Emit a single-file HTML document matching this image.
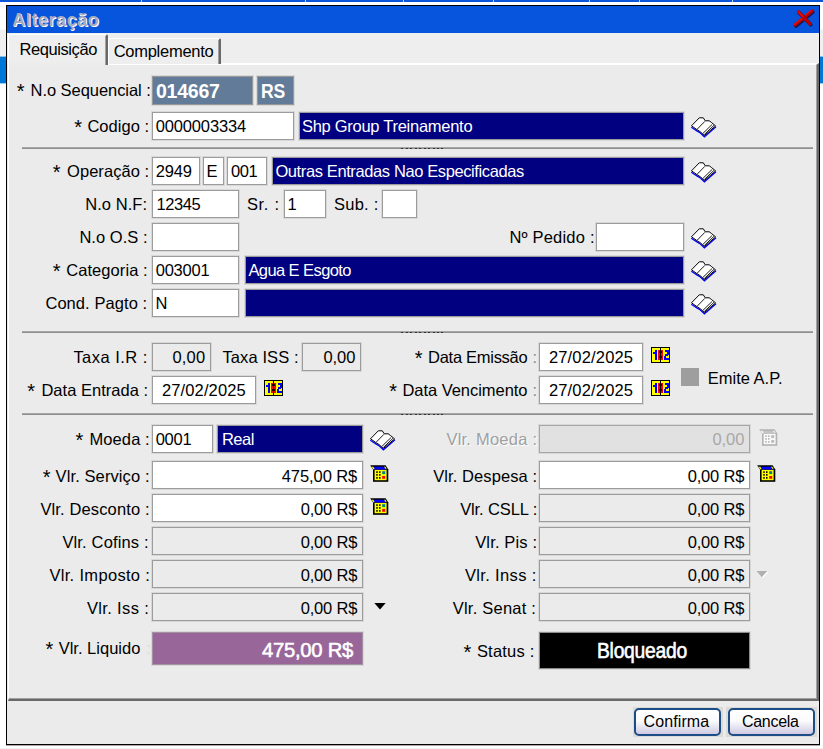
<!DOCTYPE html>
<html><head><meta charset="utf-8"><title>Alteração</title>
<style>
html,body{margin:0;padding:0;}
body{width:823px;height:749px;position:relative;overflow:hidden;background:#fff;font-family:"Liberation Sans", sans-serif;font-size:16.5px;color:#000;}
div,svg{position:absolute;}
</style></head><body>
<div style="left:0;top:0;width:823px;height:2px;background:#0a55d8"></div><div style="position:absolute;left:141px;top:0;width:1px;height:2px;background:#b8cdf0"></div><div style="position:absolute;left:305px;top:0;width:1px;height:2px;background:#b8cdf0"></div><div style="position:absolute;left:403px;top:0;width:1px;height:2px;background:#b8cdf0"></div><div style="position:absolute;left:493px;top:0;width:1px;height:2px;background:#b8cdf0"></div><div style="position:absolute;left:589px;top:0;width:1px;height:2px;background:#b8cdf0"></div><div style="position:absolute;left:639px;top:0;width:1px;height:2px;background:#b8cdf0"></div><div style="position:absolute;left:732px;top:0;width:1px;height:2px;background:#b8cdf0"></div>
<div style="left:0;top:29px;width:823px;height:1px;background:#f8f8f8"></div>
<div style="left:0;top:30px;width:823px;height:27px;background:#f0f0f0"></div>
<div style="left:0;top:56px;width:823px;height:1px;background:#90c0e6"></div>
<div style="left:0;top:57px;width:823px;height:26px;background:#0078d7"></div>
<div style="left:0;top:83px;width:823px;height:1px;background:#99cfef"></div>
<div style="left:0;top:748px;width:823px;height:1px;background:#f3f3f3"></div>
<!-- window -->
<div style="left:6px;top:5px;width:814px;height:740px;box-sizing:border-box;border:1px solid #000;background:#ebebeb"></div>
<div style="left:7px;top:6px;width:812px;height:27px;background:#0855dd"></div>
<div style="left:6px;top:745px;width:814px;height:1px;background:#a8a8a8"></div>
<!-- close X -->
<svg style="left:791px;top:8px" width="26" height="22" viewBox="0 0 26 22"><path d="M7.4,3.9 L18.9,15.7 M21,3 L4,17" stroke="#1c1458" stroke-width="3.5" stroke-linecap="round" fill="none" transform="translate(0.9,1.1)"/><path d="M7.4,3.9 L18.9,15.7 M21,3 L4,17" stroke="#b40000" stroke-width="3.4" stroke-linecap="round" fill="none"/><path d="M6.8,3.2 L12,8.6 M20.4,2.2 L14.5,7.2 M11,10.5 L3.2,16.6" stroke="#f01414" stroke-width="1.1" stroke-linecap="round" fill="none"/></svg>
<!-- tab strip -->
<div style="left:7px;top:33px;width:812px;height:31px;background:#eeeeee"></div>
<!-- tab page -->
<div style="left:8px;top:63px;width:811px;height:638px;box-sizing:border-box;background:#ebebeb;border-top:2px solid #fff;border-left:1px solid #fff;border-right:3px solid #696969;border-bottom:3px solid #696969"></div>
<div style="left:816px;top:65px;width:1px;height:634px;background:#a0a0a0"></div>
<div style="left:9px;top:698px;width:808px;height:1px;background:#a0a0a0"></div>
<!-- inactive tab -->
<div style="left:108px;top:38px;width:113px;height:26px;box-sizing:border-box;background:#eeeeee;border-top:1px solid #fff;border-left:1px solid #fff;border-right:2px solid #696969;border-radius:2px 2px 0 0"></div>
<div style="left:218px;top:40px;width:1px;height:24px;background:#a0a0a0"></div>
<!-- active tab -->
<div style="left:8px;top:34px;width:100px;height:31px;box-sizing:border-box;background:#eeeeee;border-top:1px solid #fff;border-left:1px solid #fff;border-right:2px solid #696969;border-radius:2px 2px 0 0"></div>
<div style="left:105px;top:36px;width:1px;height:29px;background:#a0a0a0"></div>
<div style="left:9px;top:63px;width:96px;height:3px;background:#ececec"></div>
<div style="position:absolute;left:22px;top:147px;width:791px;height:1px;background:#a6a6a6"></div><div style="position:absolute;left:22px;top:148px;width:791px;height:1px;background:#8e8e8e"></div><div style="position:absolute;left:401px;top:148px;width:2px;height:1px;background:#333"></div><div style="position:absolute;left:406px;top:148px;width:2px;height:1px;background:#333"></div><div style="position:absolute;left:410px;top:148px;width:2px;height:1px;background:#333"></div><div style="position:absolute;left:415px;top:148px;width:2px;height:1px;background:#333"></div><div style="position:absolute;left:419px;top:148px;width:2px;height:1px;background:#333"></div><div style="position:absolute;left:424px;top:148px;width:2px;height:1px;background:#333"></div><div style="position:absolute;left:428px;top:148px;width:2px;height:1px;background:#333"></div><div style="position:absolute;left:433px;top:148px;width:2px;height:1px;background:#333"></div><div style="position:absolute;left:437px;top:148px;width:2px;height:1px;background:#333"></div><div style="position:absolute;left:441px;top:148px;width:2px;height:1px;background:#333"></div><div style="position:absolute;left:22px;top:331px;width:791px;height:1px;background:#a6a6a6"></div><div style="position:absolute;left:22px;top:332px;width:791px;height:1px;background:#8e8e8e"></div><div style="position:absolute;left:401px;top:332px;width:2px;height:1px;background:#333"></div><div style="position:absolute;left:406px;top:332px;width:2px;height:1px;background:#333"></div><div style="position:absolute;left:410px;top:332px;width:2px;height:1px;background:#333"></div><div style="position:absolute;left:415px;top:332px;width:2px;height:1px;background:#333"></div><div style="position:absolute;left:419px;top:332px;width:2px;height:1px;background:#333"></div><div style="position:absolute;left:424px;top:332px;width:2px;height:1px;background:#333"></div><div style="position:absolute;left:428px;top:332px;width:2px;height:1px;background:#333"></div><div style="position:absolute;left:433px;top:332px;width:2px;height:1px;background:#333"></div><div style="position:absolute;left:437px;top:332px;width:2px;height:1px;background:#333"></div><div style="position:absolute;left:441px;top:332px;width:2px;height:1px;background:#333"></div><div style="position:absolute;left:22px;top:413px;width:791px;height:1px;background:#a6a6a6"></div><div style="position:absolute;left:22px;top:414px;width:791px;height:1px;background:#8e8e8e"></div><div style="position:absolute;left:401px;top:414px;width:2px;height:1px;background:#333"></div><div style="position:absolute;left:406px;top:414px;width:2px;height:1px;background:#333"></div><div style="position:absolute;left:410px;top:414px;width:2px;height:1px;background:#333"></div><div style="position:absolute;left:415px;top:414px;width:2px;height:1px;background:#333"></div><div style="position:absolute;left:419px;top:414px;width:2px;height:1px;background:#333"></div><div style="position:absolute;left:424px;top:414px;width:2px;height:1px;background:#333"></div><div style="position:absolute;left:428px;top:414px;width:2px;height:1px;background:#333"></div><div style="position:absolute;left:433px;top:414px;width:2px;height:1px;background:#333"></div><div style="position:absolute;left:437px;top:414px;width:2px;height:1px;background:#333"></div><div style="position:absolute;left:441px;top:414px;width:2px;height:1px;background:#333"></div>
<div style="position:absolute;left:152px;top:76px;width:101px;height:29px;box-sizing:border-box;background:#617b98;border:1px solid #989898;box-shadow:0 0 0 1px rgba(150,150,150,0.22);"></div><div style="position:absolute;left:257px;top:76px;width:37px;height:29px;box-sizing:border-box;background:#617b98;border:1px solid #989898;box-shadow:0 0 0 1px rgba(150,150,150,0.22);"></div><div style="position:absolute;left:152px;top:112px;width:142px;height:28px;box-sizing:border-box;background:#fff;border:1px solid #9c9c9c;box-shadow:0 0 0 1px rgba(150,150,150,0.22);"></div><div style="position:absolute;left:299px;top:112px;width:385px;height:28px;box-sizing:border-box;background:#000080;border:1px solid #9c9c9c;box-shadow:0 0 0 1px rgba(150,150,150,0.22);"></div><div style="position:absolute;left:152px;top:157px;width:48px;height:28px;box-sizing:border-box;background:#fff;border:1px solid #9c9c9c;box-shadow:0 0 0 1px rgba(150,150,150,0.22);"></div><div style="position:absolute;left:203px;top:157px;width:21px;height:28px;box-sizing:border-box;background:#fff;border:1px solid #9c9c9c;box-shadow:0 0 0 1px rgba(150,150,150,0.22);"></div><div style="position:absolute;left:227px;top:157px;width:40px;height:28px;box-sizing:border-box;background:#fff;border:1px solid #9c9c9c;box-shadow:0 0 0 1px rgba(150,150,150,0.22);"></div><div style="position:absolute;left:272px;top:157px;width:412px;height:28px;box-sizing:border-box;background:#000080;border:1px solid #9c9c9c;box-shadow:0 0 0 1px rgba(150,150,150,0.22);"></div><div style="position:absolute;left:152px;top:190px;width:87px;height:28px;box-sizing:border-box;background:#fff;border:1px solid #9c9c9c;box-shadow:0 0 0 1px rgba(150,150,150,0.22);"></div><div style="position:absolute;left:284px;top:190px;width:42px;height:28px;box-sizing:border-box;background:#fff;border:1px solid #9c9c9c;box-shadow:0 0 0 1px rgba(150,150,150,0.22);"></div><div style="position:absolute;left:382px;top:190px;width:35px;height:28px;box-sizing:border-box;background:#fff;border:1px solid #9c9c9c;box-shadow:0 0 0 1px rgba(150,150,150,0.22);"></div><div style="position:absolute;left:152px;top:223px;width:87px;height:28px;box-sizing:border-box;background:#fff;border:1px solid #9c9c9c;box-shadow:0 0 0 1px rgba(150,150,150,0.22);"></div><div style="position:absolute;left:596px;top:223px;width:88px;height:28px;box-sizing:border-box;background:#fff;border:1px solid #9c9c9c;box-shadow:0 0 0 1px rgba(150,150,150,0.22);"></div><div style="position:absolute;left:152px;top:256px;width:87px;height:28px;box-sizing:border-box;background:#fff;border:1px solid #9c9c9c;box-shadow:0 0 0 1px rgba(150,150,150,0.22);"></div><div style="position:absolute;left:245px;top:256px;width:439px;height:28px;box-sizing:border-box;background:#000080;border:1px solid #9c9c9c;box-shadow:0 0 0 1px rgba(150,150,150,0.22);"></div><div style="position:absolute;left:152px;top:289px;width:87px;height:28px;box-sizing:border-box;background:#fff;border:1px solid #9c9c9c;box-shadow:0 0 0 1px rgba(150,150,150,0.22);"></div><div style="position:absolute;left:245px;top:289px;width:439px;height:28px;box-sizing:border-box;background:#000080;border:1px solid #9c9c9c;box-shadow:0 0 0 1px rgba(150,150,150,0.22);"></div><div style="position:absolute;left:152px;top:343px;width:59px;height:28px;box-sizing:border-box;background:#ebebeb;border:1px solid #9c9c9c;box-shadow:0 0 0 1px rgba(150,150,150,0.22);"></div><div style="position:absolute;left:302px;top:343px;width:59px;height:28px;box-sizing:border-box;background:#ebebeb;border:1px solid #9c9c9c;box-shadow:0 0 0 1px rgba(150,150,150,0.22);"></div><div style="position:absolute;left:539px;top:343px;width:104px;height:28px;box-sizing:border-box;background:#fff;border:1px solid #9c9c9c;box-shadow:0 0 0 1px rgba(150,150,150,0.22);"></div><div style="position:absolute;left:152px;top:376px;width:104px;height:28px;box-sizing:border-box;background:#fff;border:1px solid #9c9c9c;box-shadow:0 0 0 1px rgba(150,150,150,0.22);"></div><div style="position:absolute;left:539px;top:376px;width:104px;height:28px;box-sizing:border-box;background:#fff;border:1px solid #9c9c9c;box-shadow:0 0 0 1px rgba(150,150,150,0.22);"></div><div style="position:absolute;left:152px;top:425px;width:61px;height:28px;box-sizing:border-box;background:#fff;border:1px solid #9c9c9c;box-shadow:0 0 0 1px rgba(150,150,150,0.22);"></div><div style="position:absolute;left:217px;top:425px;width:146px;height:28px;box-sizing:border-box;background:#000080;border:1px solid #9c9c9c;box-shadow:0 0 0 1px rgba(150,150,150,0.22);"></div><div style="position:absolute;left:539px;top:425px;width:211px;height:28px;box-sizing:border-box;background:#e1e1e1;border:1px solid #a6a6a6;box-shadow:0 0 0 1px rgba(150,150,150,0.22);"></div><div style="position:absolute;left:152px;top:461px;width:211px;height:28px;box-sizing:border-box;background:#fff;border:1px solid #9c9c9c;box-shadow:0 0 0 1px rgba(150,150,150,0.22);"></div><div style="position:absolute;left:539px;top:461px;width:211px;height:28px;box-sizing:border-box;background:#fff;border:1px solid #9c9c9c;box-shadow:0 0 0 1px rgba(150,150,150,0.22);"></div><div style="position:absolute;left:152px;top:494px;width:211px;height:28px;box-sizing:border-box;background:#fff;border:1px solid #9c9c9c;box-shadow:0 0 0 1px rgba(150,150,150,0.22);"></div><div style="position:absolute;left:539px;top:494px;width:211px;height:28px;box-sizing:border-box;background:#ebebeb;border:1px solid #9c9c9c;box-shadow:0 0 0 1px rgba(150,150,150,0.22);"></div><div style="position:absolute;left:152px;top:527px;width:211px;height:28px;box-sizing:border-box;background:#ebebeb;border:1px solid #9c9c9c;box-shadow:0 0 0 1px rgba(150,150,150,0.22);"></div><div style="position:absolute;left:539px;top:527px;width:211px;height:28px;box-sizing:border-box;background:#ebebeb;border:1px solid #9c9c9c;box-shadow:0 0 0 1px rgba(150,150,150,0.22);"></div><div style="position:absolute;left:152px;top:560px;width:211px;height:28px;box-sizing:border-box;background:#ebebeb;border:1px solid #9c9c9c;box-shadow:0 0 0 1px rgba(150,150,150,0.22);"></div><div style="position:absolute;left:539px;top:560px;width:211px;height:28px;box-sizing:border-box;background:#ebebeb;border:1px solid #9c9c9c;box-shadow:0 0 0 1px rgba(150,150,150,0.22);"></div><div style="position:absolute;left:152px;top:593px;width:211px;height:28px;box-sizing:border-box;background:#ebebeb;border:1px solid #9c9c9c;box-shadow:0 0 0 1px rgba(150,150,150,0.22);"></div><div style="position:absolute;left:539px;top:593px;width:211px;height:28px;box-sizing:border-box;background:#ebebeb;border:1px solid #9c9c9c;box-shadow:0 0 0 1px rgba(150,150,150,0.22);"></div><div style="position:absolute;left:152px;top:632px;width:211px;height:33px;box-sizing:border-box;background:#996699;border:1px solid #a392a3;box-shadow:0 0 0 1px rgba(150,150,150,0.22);"></div><div style="position:absolute;left:539px;top:632px;width:211px;height:37px;box-sizing:border-box;background:#000;border:1px solid #8c8c8c;box-shadow:0 0 0 1px rgba(150,150,150,0.22);"></div>
<div style="position:absolute;left:16.7px;top:77px;height:29px;line-height:29px;font-size:20px;font-weight:normal;color:#000;letter-spacing:0.00px;white-space:nowrap;">*</div><div style="position:absolute;left:30.6px;top:76px;height:29px;line-height:29px;font-size:16.5px;font-weight:normal;color:#000;letter-spacing:-0.06px;white-space:nowrap;">N.o Sequencial :</div><div style="position:absolute;left:155.9px;top:77px;height:29px;line-height:29px;font-size:19.5px;font-weight:bold;color:#fff;letter-spacing:-0.21px;white-space:nowrap;">014667</div><div style="position:absolute;left:260.7px;top:77px;height:29px;line-height:29px;font-size:19.5px;font-weight:bold;color:#fff;letter-spacing:-0.30px;white-space:nowrap;transform:scaleX(0.9021);transform-origin:0 50%;">RS</div><div style="position:absolute;left:74.2px;top:113px;height:28px;line-height:28px;font-size:20px;font-weight:normal;color:#000;letter-spacing:0.00px;white-space:nowrap;">*</div><div style="position:absolute;left:87.4px;top:112px;height:28px;line-height:28px;font-size:16.5px;font-weight:normal;color:#000;letter-spacing:0.04px;white-space:nowrap;">Codigo :</div><div style="position:absolute;left:155.7px;top:112px;height:28px;line-height:28px;font-size:16.5px;font-weight:normal;color:#000;letter-spacing:-0.14px;white-space:nowrap;">0000003334</div><div style="position:absolute;left:301.9px;top:112px;height:28px;line-height:28px;font-size:16.5px;font-weight:normal;color:#fff;letter-spacing:-0.27px;white-space:nowrap;">Shp Group Treinamento</div><div style="position:absolute;left:52.7px;top:158px;height:28px;line-height:28px;font-size:20px;font-weight:normal;color:#000;letter-spacing:0.00px;white-space:nowrap;">*</div><div style="position:absolute;left:67.0px;top:157px;height:28px;line-height:28px;font-size:16.5px;font-weight:normal;color:#000;letter-spacing:0.06px;white-space:nowrap;">Operação :</div><div style="position:absolute;left:155.7px;top:157px;height:28px;line-height:28px;font-size:16.5px;font-weight:normal;color:#000;letter-spacing:-0.13px;white-space:nowrap;">2949</div><div style="position:absolute;left:206.4px;top:157px;height:28px;line-height:28px;font-size:16.5px;font-weight:normal;color:#000;letter-spacing:0.00px;white-space:nowrap;">E</div><div style="position:absolute;left:230.9px;top:157px;height:28px;line-height:28px;font-size:16.5px;font-weight:normal;color:#000;letter-spacing:-0.34px;white-space:nowrap;">001</div><div style="position:absolute;left:275.4px;top:157px;height:28px;line-height:28px;font-size:16.5px;font-weight:normal;color:#fff;letter-spacing:-0.39px;white-space:nowrap;">Outras Entradas Nao Especificadas</div><div style="position:absolute;left:85.2px;top:190px;height:28px;line-height:28px;font-size:16.5px;font-weight:normal;color:#000;letter-spacing:0.07px;white-space:nowrap;">N.o N.F:</div><div style="position:absolute;left:156.4px;top:190px;height:28px;line-height:28px;font-size:16.5px;font-weight:normal;color:#000;letter-spacing:-0.38px;white-space:nowrap;">12345</div><div style="position:absolute;left:246.9px;top:190px;height:28px;line-height:28px;font-size:16.5px;font-weight:normal;color:#000;letter-spacing:0.69px;white-space:nowrap;">Sr. :</div><div style="position:absolute;left:287.4px;top:190px;height:28px;line-height:28px;font-size:16.5px;font-weight:normal;color:#000;letter-spacing:0.00px;white-space:nowrap;">1</div><div style="position:absolute;left:333.9px;top:190px;height:28px;line-height:28px;font-size:16.5px;font-weight:normal;color:#000;letter-spacing:0.28px;white-space:nowrap;">Sub. :</div><div style="position:absolute;left:79.4px;top:223px;height:28px;line-height:28px;font-size:16.5px;font-weight:normal;color:#000;letter-spacing:0.05px;white-space:nowrap;">N.o O.S :</div><div style="position:absolute;left:509.4px;top:223px;height:28px;line-height:28px;font-size:16.5px;font-weight:normal;color:#000;letter-spacing:0.20px;white-space:nowrap;">Nº Pedido :</div><div style="position:absolute;left:52.7px;top:257px;height:28px;line-height:28px;font-size:20px;font-weight:normal;color:#000;letter-spacing:0.00px;white-space:nowrap;">*</div><div style="position:absolute;left:66.2px;top:256px;height:28px;line-height:28px;font-size:16.5px;font-weight:normal;color:#000;letter-spacing:0.08px;white-space:nowrap;">Categoria :</div><div style="position:absolute;left:155.7px;top:256px;height:28px;line-height:28px;font-size:16.5px;font-weight:normal;color:#000;letter-spacing:-0.23px;white-space:nowrap;">003001</div><div style="position:absolute;left:248.4px;top:256px;height:28px;line-height:28px;font-size:16.5px;font-weight:normal;color:#fff;letter-spacing:-0.58px;white-space:nowrap;">Agua E Esgoto</div><div style="position:absolute;left:45.4px;top:289px;height:28px;line-height:28px;font-size:16.5px;font-weight:normal;color:#000;letter-spacing:0.07px;white-space:nowrap;">Cond. Pagto :</div><div style="position:absolute;left:155.4px;top:289px;height:28px;line-height:28px;font-size:16.5px;font-weight:normal;color:#000;letter-spacing:0.00px;white-space:nowrap;">N</div><div style="position:absolute;left:73.4px;top:343px;height:28px;line-height:28px;font-size:16.5px;font-weight:normal;color:#000;letter-spacing:0.46px;white-space:nowrap;">Taxa I.R :</div><div style="position:absolute;left:172.4px;top:343px;height:28px;line-height:28px;font-size:16.5px;font-weight:normal;color:#000;letter-spacing:0.22px;white-space:nowrap;">0,00</div><div style="position:absolute;left:222.4px;top:343px;height:28px;line-height:28px;font-size:16.5px;font-weight:normal;color:#000;letter-spacing:0.11px;white-space:nowrap;">Taxa ISS :</div><div style="position:absolute;left:323.4px;top:343px;height:28px;line-height:28px;font-size:16.5px;font-weight:normal;color:#000;letter-spacing:-0.03px;white-space:nowrap;">0,00</div><div style="position:absolute;left:414.7px;top:344px;height:28px;line-height:28px;font-size:20px;font-weight:normal;color:#000;letter-spacing:0.00px;white-space:nowrap;">*</div><div style="position:absolute;left:428.1px;top:343px;height:28px;line-height:28px;font-size:16.5px;font-weight:normal;color:#000;letter-spacing:-0.29px;white-space:nowrap;">Data Emissão</div><div style="position:absolute;left:532.6px;top:343px;height:28px;line-height:28px;font-size:16.5px;font-weight:normal;color:#8a8a8a;letter-spacing:0.00px;white-space:nowrap;">:</div><div style="position:absolute;left:548.9px;top:343px;height:28px;line-height:28px;font-size:16.5px;font-weight:normal;color:#000;letter-spacing:0.17px;white-space:nowrap;">27/02/2025</div><div style="position:absolute;left:27.2px;top:377px;height:28px;line-height:28px;font-size:20px;font-weight:normal;color:#000;letter-spacing:0.00px;white-space:nowrap;">*</div><div style="position:absolute;left:41.4px;top:376px;height:28px;line-height:28px;font-size:16.5px;font-weight:normal;color:#000;letter-spacing:0.03px;white-space:nowrap;">Data Entrada :</div><div style="position:absolute;left:161.9px;top:376px;height:28px;line-height:28px;font-size:16.5px;font-weight:normal;color:#000;letter-spacing:0.14px;white-space:nowrap;">27/02/2025</div><div style="position:absolute;left:389.2px;top:377px;height:28px;line-height:28px;font-size:20px;font-weight:normal;color:#000;letter-spacing:0.00px;white-space:nowrap;">*</div><div style="position:absolute;left:402.4px;top:376px;height:28px;line-height:28px;font-size:16.5px;font-weight:normal;color:#000;letter-spacing:-0.04px;white-space:nowrap;">Data Vencimento</div><div style="position:absolute;left:532.6px;top:376px;height:28px;line-height:28px;font-size:16.5px;font-weight:normal;color:#8a8a8a;letter-spacing:0.00px;white-space:nowrap;">:</div><div style="position:absolute;left:548.9px;top:376px;height:28px;line-height:28px;font-size:16.5px;font-weight:normal;color:#000;letter-spacing:0.17px;white-space:nowrap;">27/02/2025</div><div style="position:absolute;left:707.8px;top:364px;height:28px;line-height:28px;font-size:16.5px;font-weight:normal;color:#000;letter-spacing:-0.01px;white-space:nowrap;">Emite A.P.</div><div style="position:absolute;left:75.5px;top:426px;height:28px;line-height:28px;font-size:20px;font-weight:normal;color:#000;letter-spacing:0.00px;white-space:nowrap;">*</div><div style="position:absolute;left:89.5px;top:425px;height:28px;line-height:28px;font-size:16.5px;font-weight:normal;color:#000;letter-spacing:0.09px;white-space:nowrap;">Moeda :</div><div style="position:absolute;left:155.7px;top:425px;height:28px;line-height:28px;font-size:16.5px;font-weight:normal;color:#000;letter-spacing:-0.25px;white-space:nowrap;">0001</div><div style="position:absolute;left:221.9px;top:425px;height:28px;line-height:28px;font-size:16.5px;font-weight:normal;color:#fff;letter-spacing:-0.48px;white-space:nowrap;">Real</div><div style="position:absolute;left:446.4px;top:425px;height:28px;line-height:28px;font-size:16.5px;font-weight:normal;color:#a0a0a0;letter-spacing:0.23px;white-space:nowrap;text-shadow:1px 1px 0 #fff;">Vlr. Moeda :</div><div style="position:absolute;left:712.4px;top:425px;height:28px;line-height:28px;font-size:16.5px;font-weight:normal;color:#a8a8a8;letter-spacing:-0.03px;white-space:nowrap;">0,00</div><div style="position:absolute;left:42.7px;top:463px;height:28px;line-height:28px;font-size:20px;font-weight:normal;color:#000;letter-spacing:0.00px;white-space:nowrap;">*</div><div style="position:absolute;left:55.6px;top:462px;height:28px;line-height:28px;font-size:16.5px;font-weight:normal;color:#000;letter-spacing:0.10px;white-space:nowrap;">Vlr. Serviço :</div><div style="position:absolute;left:433.2px;top:462px;height:28px;line-height:28px;font-size:16.5px;font-weight:normal;color:#000;letter-spacing:0.09px;white-space:nowrap;">Vlr. Despesa :</div><div style="position:absolute;left:281.7px;top:462px;height:28px;line-height:28px;font-size:16.5px;font-weight:normal;color:#000;letter-spacing:-0.07px;white-space:nowrap;">475,00 R$</div><div style="position:absolute;left:687.7px;top:462px;height:28px;line-height:28px;font-size:16.5px;font-weight:normal;color:#000;letter-spacing:-0.19px;white-space:nowrap;">0,00 R$</div><div style="position:absolute;left:40.4px;top:495px;height:28px;line-height:28px;font-size:16.5px;font-weight:normal;color:#000;letter-spacing:0.13px;white-space:nowrap;">Vlr. Desconto :</div><div style="position:absolute;left:460.2px;top:495px;height:28px;line-height:28px;font-size:16.5px;font-weight:normal;color:#000;letter-spacing:-0.12px;white-space:nowrap;">Vlr. CSLL :</div><div style="position:absolute;left:300.7px;top:495px;height:28px;line-height:28px;font-size:16.5px;font-weight:normal;color:#000;letter-spacing:-0.19px;white-space:nowrap;">0,00 R$</div><div style="position:absolute;left:687.7px;top:495px;height:28px;line-height:28px;font-size:16.5px;font-weight:normal;color:#000;letter-spacing:-0.19px;white-space:nowrap;">0,00 R$</div><div style="position:absolute;left:62.4px;top:528px;height:28px;line-height:28px;font-size:16.5px;font-weight:normal;color:#000;letter-spacing:0.15px;white-space:nowrap;">Vlr. Cofins :</div><div style="position:absolute;left:475.2px;top:528px;height:28px;line-height:28px;font-size:16.5px;font-weight:normal;color:#000;letter-spacing:0.15px;white-space:nowrap;">Vlr. Pis :</div><div style="position:absolute;left:300.7px;top:528px;height:28px;line-height:28px;font-size:16.5px;font-weight:normal;color:#000;letter-spacing:-0.19px;white-space:nowrap;">0,00 R$</div><div style="position:absolute;left:687.7px;top:528px;height:28px;line-height:28px;font-size:16.5px;font-weight:normal;color:#000;letter-spacing:-0.19px;white-space:nowrap;">0,00 R$</div><div style="position:absolute;left:49.4px;top:561px;height:28px;line-height:28px;font-size:16.5px;font-weight:normal;color:#000;letter-spacing:0.32px;white-space:nowrap;">Vlr. Imposto :</div><div style="position:absolute;left:464.9px;top:561px;height:28px;line-height:28px;font-size:16.5px;font-weight:normal;color:#000;letter-spacing:0.36px;white-space:nowrap;">Vlr. Inss :</div><div style="position:absolute;left:300.7px;top:561px;height:28px;line-height:28px;font-size:16.5px;font-weight:normal;color:#000;letter-spacing:-0.19px;white-space:nowrap;">0,00 R$</div><div style="position:absolute;left:687.7px;top:561px;height:28px;line-height:28px;font-size:16.5px;font-weight:normal;color:#000;letter-spacing:-0.19px;white-space:nowrap;">0,00 R$</div><div style="position:absolute;left:86.9px;top:594px;height:28px;line-height:28px;font-size:16.5px;font-weight:normal;color:#000;letter-spacing:0.36px;white-space:nowrap;">Vlr. Iss :</div><div style="position:absolute;left:452.7px;top:594px;height:28px;line-height:28px;font-size:16.5px;font-weight:normal;color:#000;letter-spacing:0.23px;white-space:nowrap;">Vlr. Senat :</div><div style="position:absolute;left:300.7px;top:594px;height:28px;line-height:28px;font-size:16.5px;font-weight:normal;color:#000;letter-spacing:-0.19px;white-space:nowrap;">0,00 R$</div><div style="position:absolute;left:687.7px;top:594px;height:28px;line-height:28px;font-size:16.5px;font-weight:normal;color:#000;letter-spacing:-0.19px;white-space:nowrap;">0,00 R$</div><div style="position:absolute;left:45.5px;top:633px;height:33px;line-height:33px;font-size:20px;font-weight:normal;color:#000;letter-spacing:0.00px;white-space:nowrap;">*</div><div style="position:absolute;left:58.7px;top:632px;height:33px;line-height:33px;font-size:16.5px;font-weight:normal;color:#000;letter-spacing:0.00px;white-space:nowrap;">Vlr. Liquido</div><div style="position:absolute;left:146.4px;top:632px;height:33px;line-height:33px;font-size:16.5px;font-weight:normal;color:#e8d8c8;letter-spacing:0.00px;white-space:nowrap;">:</div><div style="position:absolute;left:261.9px;top:633px;height:33px;line-height:33px;font-size:21px;font-weight:normal;color:#fff;letter-spacing:-0.30px;white-space:nowrap;-webkit-text-stroke:0.55px #fff;transform:scaleX(0.9658);transform-origin:0 50%;">475,00 R$</div><div style="position:absolute;left:463.5px;top:634px;height:37px;line-height:37px;font-size:20px;font-weight:normal;color:#000;letter-spacing:0.00px;white-space:nowrap;">*</div><div style="position:absolute;left:476.9px;top:633px;height:37px;line-height:37px;font-size:16.5px;font-weight:normal;color:#000;letter-spacing:0.22px;white-space:nowrap;">Status :</div><div style="position:absolute;left:596.8px;top:632px;height:37px;line-height:37px;font-size:22px;font-weight:normal;color:#fff;letter-spacing:-0.30px;white-space:nowrap;-webkit-text-stroke:0.6px #fff;transform:scaleX(0.8769);transform-origin:0 50%;">Bloqueado</div><div style="position:absolute;left:12.3px;top:7px;height:27px;line-height:27px;font-size:18px;font-weight:bold;color:#a8abbe;letter-spacing:0.56px;white-space:nowrap;text-shadow:1px 1px 0 #fff;">Alteração</div><div style="position:absolute;left:19.4px;top:35px;height:28px;line-height:28px;font-size:16.5px;font-weight:normal;color:#000;letter-spacing:-0.41px;white-space:nowrap;">Requisição</div><div style="position:absolute;left:113.7px;top:38px;height:27px;line-height:27px;font-size:16.5px;font-weight:normal;color:#000;letter-spacing:-0.27px;white-space:nowrap;">Complemento</div><div style="position:absolute;left:643.6px;top:708px;height:28px;line-height:28px;font-size:16px;font-weight:normal;color:#000;letter-spacing:0.09px;white-space:nowrap;">Confirma</div><div style="position:absolute;left:741.9px;top:708px;height:28px;line-height:28px;font-size:16px;font-weight:normal;color:#000;letter-spacing:-0.27px;white-space:nowrap;">Cancela</div>
<svg style="position:absolute;left:690px;top:116px" width="27" height="23" viewBox="0 0 27 23"><polyline points="1.3,11.3 6.9,14.9 10.4,17 14.4,20.8 26,10.8" fill="none" stroke="#0000ff" stroke-width="1.3"/><polygon points="1.5,9.8 9.3,1.8 13.3,1.8 15.2,4.8 19.2,4.8 21.6,6.6 25.6,9.9 14.4,19.5 10.4,15.8 6.9,13.6" fill="#fff" stroke="#000" stroke-width="1" stroke-linejoin="round"/><path d="M14.8,5.4 L7.2,13.2 M22.2,8.4 L12.9,17.4 M24,9.3 L14.2,18.6" stroke="#000" stroke-width="0.9" fill="none"/></svg><svg style="position:absolute;left:690px;top:161px" width="27" height="23" viewBox="0 0 27 23"><polyline points="1.3,11.3 6.9,14.9 10.4,17 14.4,20.8 26,10.8" fill="none" stroke="#0000ff" stroke-width="1.3"/><polygon points="1.5,9.8 9.3,1.8 13.3,1.8 15.2,4.8 19.2,4.8 21.6,6.6 25.6,9.9 14.4,19.5 10.4,15.8 6.9,13.6" fill="#fff" stroke="#000" stroke-width="1" stroke-linejoin="round"/><path d="M14.8,5.4 L7.2,13.2 M22.2,8.4 L12.9,17.4 M24,9.3 L14.2,18.6" stroke="#000" stroke-width="0.9" fill="none"/></svg><svg style="position:absolute;left:690px;top:227px" width="27" height="23" viewBox="0 0 27 23"><polyline points="1.3,11.3 6.9,14.9 10.4,17 14.4,20.8 26,10.8" fill="none" stroke="#0000ff" stroke-width="1.3"/><polygon points="1.5,9.8 9.3,1.8 13.3,1.8 15.2,4.8 19.2,4.8 21.6,6.6 25.6,9.9 14.4,19.5 10.4,15.8 6.9,13.6" fill="#fff" stroke="#000" stroke-width="1" stroke-linejoin="round"/><path d="M14.8,5.4 L7.2,13.2 M22.2,8.4 L12.9,17.4 M24,9.3 L14.2,18.6" stroke="#000" stroke-width="0.9" fill="none"/></svg><svg style="position:absolute;left:690px;top:260px" width="27" height="23" viewBox="0 0 27 23"><polyline points="1.3,11.3 6.9,14.9 10.4,17 14.4,20.8 26,10.8" fill="none" stroke="#0000ff" stroke-width="1.3"/><polygon points="1.5,9.8 9.3,1.8 13.3,1.8 15.2,4.8 19.2,4.8 21.6,6.6 25.6,9.9 14.4,19.5 10.4,15.8 6.9,13.6" fill="#fff" stroke="#000" stroke-width="1" stroke-linejoin="round"/><path d="M14.8,5.4 L7.2,13.2 M22.2,8.4 L12.9,17.4 M24,9.3 L14.2,18.6" stroke="#000" stroke-width="0.9" fill="none"/></svg><svg style="position:absolute;left:690px;top:293px" width="27" height="23" viewBox="0 0 27 23"><polyline points="1.3,11.3 6.9,14.9 10.4,17 14.4,20.8 26,10.8" fill="none" stroke="#0000ff" stroke-width="1.3"/><polygon points="1.5,9.8 9.3,1.8 13.3,1.8 15.2,4.8 19.2,4.8 21.6,6.6 25.6,9.9 14.4,19.5 10.4,15.8 6.9,13.6" fill="#fff" stroke="#000" stroke-width="1" stroke-linejoin="round"/><path d="M14.8,5.4 L7.2,13.2 M22.2,8.4 L12.9,17.4 M24,9.3 L14.2,18.6" stroke="#000" stroke-width="0.9" fill="none"/></svg><svg style="position:absolute;left:369px;top:429px" width="27" height="23" viewBox="0 0 27 23"><polyline points="1.3,11.3 6.9,14.9 10.4,17 14.4,20.8 26,10.8" fill="none" stroke="#0000ff" stroke-width="1.3"/><polygon points="1.5,9.8 9.3,1.8 13.3,1.8 15.2,4.8 19.2,4.8 21.6,6.6 25.6,9.9 14.4,19.5 10.4,15.8 6.9,13.6" fill="#fff" stroke="#000" stroke-width="1" stroke-linejoin="round"/><path d="M14.8,5.4 L7.2,13.2 M22.2,8.4 L12.9,17.4 M24,9.3 L14.2,18.6" stroke="#000" stroke-width="0.9" fill="none"/></svg><svg style="position:absolute;left:651px;top:347px" width="20" height="17" viewBox="0 0 20 17" shape-rendering="crispEdges"><rect x="0" y="0" width="19" height="16" fill="#000"/><rect x="1" y="1" width="17" height="14" fill="#ffff00"/><rect x="7" y="3" width="5" height="10" fill="#ff0000"/><rect x="9" y="0" width="1" height="16" fill="#000"/><rect x="8" y="4" width="3" height="2" fill="#000" opacity="0.85"/><rect x="8" y="9" width="3" height="2" fill="#000" opacity="0.85"/><rect x="4" y="3" width="2" height="10" fill="#0000ff"/><rect x="2" y="5" width="2" height="2" fill="#0000ff"/><rect x="14" y="3" width="4" height="2" fill="#0000ff"/><rect x="16" y="5" width="2" height="3" fill="#0000ff"/><rect x="14" y="7" width="3" height="2" fill="#0000ff"/><rect x="13" y="9" width="2" height="2" fill="#0000ff"/><rect x="13" y="11" width="5" height="2" fill="#0000ff"/></svg><svg style="position:absolute;left:651px;top:380px" width="20" height="17" viewBox="0 0 20 17" shape-rendering="crispEdges"><rect x="0" y="0" width="19" height="16" fill="#000"/><rect x="1" y="1" width="17" height="14" fill="#ffff00"/><rect x="7" y="3" width="5" height="10" fill="#ff0000"/><rect x="9" y="0" width="1" height="16" fill="#000"/><rect x="8" y="4" width="3" height="2" fill="#000" opacity="0.85"/><rect x="8" y="9" width="3" height="2" fill="#000" opacity="0.85"/><rect x="4" y="3" width="2" height="10" fill="#0000ff"/><rect x="2" y="5" width="2" height="2" fill="#0000ff"/><rect x="14" y="3" width="4" height="2" fill="#0000ff"/><rect x="16" y="5" width="2" height="3" fill="#0000ff"/><rect x="14" y="7" width="3" height="2" fill="#0000ff"/><rect x="13" y="9" width="2" height="2" fill="#0000ff"/><rect x="13" y="11" width="5" height="2" fill="#0000ff"/></svg><svg style="position:absolute;left:264px;top:380px" width="20" height="17" viewBox="0 0 20 17" shape-rendering="crispEdges"><rect x="0" y="0" width="19" height="16" fill="#000"/><rect x="1" y="1" width="17" height="14" fill="#ffff00"/><rect x="7" y="3" width="5" height="10" fill="#ff0000"/><rect x="9" y="0" width="1" height="16" fill="#000"/><rect x="8" y="4" width="3" height="2" fill="#000" opacity="0.85"/><rect x="8" y="9" width="3" height="2" fill="#000" opacity="0.85"/><rect x="4" y="3" width="2" height="10" fill="#0000ff"/><rect x="2" y="5" width="2" height="2" fill="#0000ff"/><rect x="14" y="3" width="4" height="2" fill="#0000ff"/><rect x="16" y="5" width="2" height="3" fill="#0000ff"/><rect x="14" y="7" width="3" height="2" fill="#0000ff"/><rect x="13" y="9" width="2" height="2" fill="#0000ff"/><rect x="13" y="11" width="5" height="2" fill="#0000ff"/></svg><svg style="position:absolute;left:757px;top:465.3px" width="19" height="18" viewBox="0 0 19 18"><rect x="3" y="4" width="15.3" height="12.8" fill="#000"/><rect x="4.6" y="4.6" width="12" height="10.6" fill="#ffff00"/><polygon points="0.2,0.2 15.6,0.2 18.3,4.6 3,4.6" fill="#000"/><polygon points="2.6,1.8 14.6,1.8 16,4.4 4.4,4.4" fill="#0000ff"/><polygon points="1.6,1.8 3.4,1.8 4.6,4 3.4,4.4" fill="#ffff00"/><polygon points="14,1.8 15.4,1.8 16.6,3.8 15.6,4" fill="#ffff00"/><g fill="#000"><rect x="6.2" y="6.3" width="1.6" height="1.6"/><rect x="9" y="6.3" width="1.6" height="1.6"/><rect x="6.2" y="9.1" width="1.6" height="1.6"/><rect x="9" y="9.1" width="1.6" height="1.6"/><rect x="6.2" y="12.1" width="1.6" height="1.6"/><rect x="9" y="12.1" width="1.6" height="1.6"/></g><rect x="12.2" y="6.2" width="3" height="2.9" fill="#008080"/><rect x="12.2" y="11" width="3" height="2.8" fill="#ff0000"/></svg><svg style="position:absolute;left:369.8px;top:465.3px" width="19" height="18" viewBox="0 0 19 18"><rect x="3" y="4" width="15.3" height="12.8" fill="#000"/><rect x="4.6" y="4.6" width="12" height="10.6" fill="#ffff00"/><polygon points="0.2,0.2 15.6,0.2 18.3,4.6 3,4.6" fill="#000"/><polygon points="2.6,1.8 14.6,1.8 16,4.4 4.4,4.4" fill="#0000ff"/><polygon points="1.6,1.8 3.4,1.8 4.6,4 3.4,4.4" fill="#ffff00"/><polygon points="14,1.8 15.4,1.8 16.6,3.8 15.6,4" fill="#ffff00"/><g fill="#000"><rect x="6.2" y="6.3" width="1.6" height="1.6"/><rect x="9" y="6.3" width="1.6" height="1.6"/><rect x="6.2" y="9.1" width="1.6" height="1.6"/><rect x="9" y="9.1" width="1.6" height="1.6"/><rect x="6.2" y="12.1" width="1.6" height="1.6"/><rect x="9" y="12.1" width="1.6" height="1.6"/></g><rect x="12.2" y="6.2" width="3" height="2.9" fill="#008080"/><rect x="12.2" y="11" width="3" height="2.8" fill="#ff0000"/></svg><svg style="position:absolute;left:369.8px;top:498.3px" width="19" height="18" viewBox="0 0 19 18"><rect x="3" y="4" width="15.3" height="12.8" fill="#000"/><rect x="4.6" y="4.6" width="12" height="10.6" fill="#ffff00"/><polygon points="0.2,0.2 15.6,0.2 18.3,4.6 3,4.6" fill="#000"/><polygon points="2.6,1.8 14.6,1.8 16,4.4 4.4,4.4" fill="#0000ff"/><polygon points="1.6,1.8 3.4,1.8 4.6,4 3.4,4.4" fill="#ffff00"/><polygon points="14,1.8 15.4,1.8 16.6,3.8 15.6,4" fill="#ffff00"/><g fill="#000"><rect x="6.2" y="6.3" width="1.6" height="1.6"/><rect x="9" y="6.3" width="1.6" height="1.6"/><rect x="6.2" y="9.1" width="1.6" height="1.6"/><rect x="9" y="9.1" width="1.6" height="1.6"/><rect x="6.2" y="12.1" width="1.6" height="1.6"/><rect x="9" y="12.1" width="1.6" height="1.6"/></g><rect x="12.2" y="6.2" width="3" height="2.9" fill="#008080"/><rect x="12.2" y="11" width="3" height="2.8" fill="#ff0000"/></svg><svg style="position:absolute;left:758.5px;top:429px" width="19" height="18" viewBox="0 0 19 18"><rect x="3" y="4" width="15.3" height="12.8" fill="#b2b2b2"/><rect x="4.6" y="4.6" width="12" height="10.6" fill="#fafafa"/><polygon points="0.2,0.2 15.6,0.2 18.3,4.6 3,4.6" fill="#b2b2b2"/><polygon points="2.6,1.8 14.6,1.8 16,4.4 4.4,4.4" fill="#c4c4c4"/><polygon points="1.6,1.8 3.4,1.8 4.6,4 3.4,4.4" fill="#fafafa"/><polygon points="14,1.8 15.4,1.8 16.6,3.8 15.6,4" fill="#fafafa"/><g fill="#b4b4b4"><rect x="6.2" y="6.3" width="1.6" height="1.6"/><rect x="9" y="6.3" width="1.6" height="1.6"/><rect x="6.2" y="9.1" width="1.6" height="1.6"/><rect x="9" y="9.1" width="1.6" height="1.6"/><rect x="6.2" y="12.1" width="1.6" height="1.6"/><rect x="9" y="12.1" width="1.6" height="1.6"/></g><rect x="12.2" y="6.2" width="3" height="2.9" fill="#bcbcbc"/><rect x="12.2" y="11" width="3" height="2.8" fill="#bcbcbc"/></svg><svg style="position:absolute;left:374px;top:603px" width="12" height="7" viewBox="0 0 12 7"><polygon points="0.3,0 11.7,0 6,6.5" fill="#000"/></svg><svg style="position:absolute;left:756px;top:571px" width="14" height="9" viewBox="0 0 14 9"><polygon points="1.5,1 12.3,1 6.9,7.2" fill="#fff"/><polygon points="0.5,0 11.3,0 5.9,6.2" fill="#b0b0b0"/></svg><div style="position:absolute;left:681px;top:368px;width:18px;height:18px;background:#9e9e9e"></div>
<!-- buttons -->
<div style="left:633px;top:707px;width:90px;height:30px;background:#dcdad6"></div>
<div style="left:726px;top:707px;width:91px;height:30px;background:#dcdad6"></div>
<div style="left:634px;top:708px;width:87px;height:28px;box-sizing:border-box;border:2px solid #1d4d86;border-radius:5px;background:linear-gradient(#ffffff 0%,#fbfbfd 45%,#cfcae2 100%)"></div>
<div style="left:728px;top:708px;width:87px;height:28px;box-sizing:border-box;border:2px solid #1d4d86;border-radius:5px;background:linear-gradient(#ffffff 0%,#fbfbfd 45%,#cfcae2 100%)"></div>
<div style="position:absolute;left:643.6px;top:708px;height:28px;line-height:28px;font-size:16px;font-weight:normal;color:#000;letter-spacing:0.09px;white-space:nowrap;">Confirma</div><div style="position:absolute;left:741.9px;top:708px;height:28px;line-height:28px;font-size:16px;font-weight:normal;color:#000;letter-spacing:-0.27px;white-space:nowrap;">Cancela</div>
</body></html>
